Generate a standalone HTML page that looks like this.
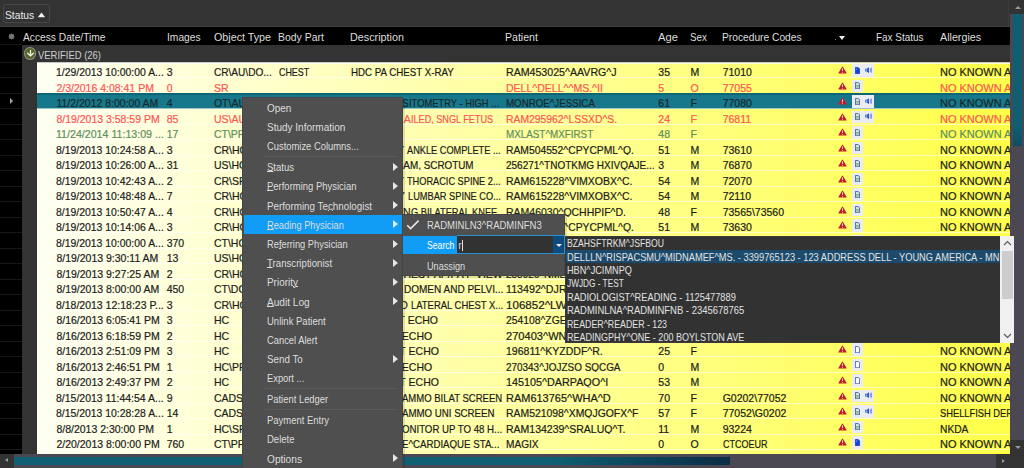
<!DOCTYPE html><html><head><meta charset="utf-8"><style>

*{margin:0;padding:0;box-sizing:border-box}
html,body{width:1024px;height:468px;overflow:hidden;background:#333333;font-family:"Liberation Sans",sans-serif}
.a{position:absolute}
.t{position:absolute;white-space:nowrap;font-size:10.5px;line-height:15.5px;-webkit-text-stroke:0.2px currentColor}
.hd{position:absolute;white-space:nowrap;font-size:10.6px;color:#dedede;top:28.7px;line-height:17.5px}

</style></head><body>
<div class="a" style="left:3px;top:4px;width:47px;height:19px;border:1px solid #474747;border-radius:2px"></div>
<div class="a" style="left:4.8px;top:7.2px;font-size:11.4px;line-height:17px;color:#eaeaea;transform:scaleX(0.904);transform-origin:0 0">Status</div>
<svg class="a" style="left:37px;top:12px" width="9" height="6" viewBox="0 0 9 6"><path d="M0.8 5.3H8.2L4.5 0.5Z" fill="#f2f2f2"/></svg>
<div class="a" style="left:0;top:26px;width:1010px;height:1px;background:#404040"></div>
<div class="a" style="left:0;top:27px;width:1010px;height:17.5px;background:#000"></div>
<div class="hd" style="left:22.799999999999997px;transform:scaleX(0.9642);transform-origin:0 0">Access Date/Time</div>
<div class="hd" style="left:166.8px;transform:scaleX(0.9669);transform-origin:0 0">Images</div>
<div class="hd" style="left:213.6px;transform:scaleX(1.0116);transform-origin:0 0">Object Type</div>
<div class="hd" style="left:278.0px;transform:scaleX(0.9864);transform-origin:0 0">Body Part</div>
<div class="hd" style="left:350.09999999999997px;transform:scaleX(1.0170);transform-origin:0 0">Description</div>
<div class="hd" style="left:505.4px;transform:scaleX(0.9974);transform-origin:0 0">Patient</div>
<div class="hd" style="left:657.6999999999999px;transform:scaleX(1.0552);transform-origin:0 0">Age</div>
<div class="hd" style="left:689.9px;transform:scaleX(0.9252);transform-origin:0 0">Sex</div>
<div class="hd" style="left:722.1px;transform:scaleX(0.9654);transform-origin:0 0">Procedure Codes</div>
<div class="hd" style="left:875.6px;transform:scaleX(0.9400);transform-origin:0 0">Fax Status</div>
<div class="hd" style="left:939.5px;transform:scaleX(1.0113);transform-origin:0 0">Allergies</div>
<div class="a" style="left:834.6px;top:38.5px;width:1.3px;height:1.3px;background:#4080d0"></div>
<div class="a" style="left:839.4px;top:35.5px;width:0;height:0;border-left:3.7px solid transparent;border-right:3.7px solid transparent;border-top:4.3px solid #f0f0f0"></div>
<svg class="a" style="left:7.5px;top:32.5px" width="7" height="7" viewBox="0 0 7 7"><path d="M3.5 0.3L4.3 1.2L5.9 1.1L5.8 2.7L6.7 3.5L5.8 4.3L5.9 5.9L4.3 5.8L3.5 6.7L2.7 5.8L1.1 5.9L1.2 4.3L0.3 3.5L1.2 2.7L1.1 1.1L2.7 1.2Z" fill="#757575"/></svg>
<div class="a" style="left:0;top:44.5px;width:22px;height:409.5px;background:#000"></div>
<div class="a" style="left:0;top:44.00px;width:22px;height:1px;background:#16161d"></div>
<div class="a" style="left:0;top:61.50px;width:22px;height:1px;background:#16161d"></div>
<div class="a" style="left:0;top:77.00px;width:22px;height:1px;background:#16161d"></div>
<div class="a" style="left:0;top:92.50px;width:22px;height:1px;background:#16161d"></div>
<div class="a" style="left:0;top:108.00px;width:22px;height:1px;background:#16161d"></div>
<div class="a" style="left:0;top:123.50px;width:22px;height:1px;background:#16161d"></div>
<div class="a" style="left:0;top:139.00px;width:22px;height:1px;background:#16161d"></div>
<div class="a" style="left:0;top:154.50px;width:22px;height:1px;background:#16161d"></div>
<div class="a" style="left:0;top:170.00px;width:22px;height:1px;background:#16161d"></div>
<div class="a" style="left:0;top:185.50px;width:22px;height:1px;background:#16161d"></div>
<div class="a" style="left:0;top:201.00px;width:22px;height:1px;background:#16161d"></div>
<div class="a" style="left:0;top:216.50px;width:22px;height:1px;background:#16161d"></div>
<div class="a" style="left:0;top:232.00px;width:22px;height:1px;background:#16161d"></div>
<div class="a" style="left:0;top:247.50px;width:22px;height:1px;background:#16161d"></div>
<div class="a" style="left:0;top:263.00px;width:22px;height:1px;background:#16161d"></div>
<div class="a" style="left:0;top:278.50px;width:22px;height:1px;background:#16161d"></div>
<div class="a" style="left:0;top:294.00px;width:22px;height:1px;background:#16161d"></div>
<div class="a" style="left:0;top:309.50px;width:22px;height:1px;background:#16161d"></div>
<div class="a" style="left:0;top:325.00px;width:22px;height:1px;background:#16161d"></div>
<div class="a" style="left:0;top:340.50px;width:22px;height:1px;background:#16161d"></div>
<div class="a" style="left:0;top:356.00px;width:22px;height:1px;background:#16161d"></div>
<div class="a" style="left:0;top:371.50px;width:22px;height:1px;background:#16161d"></div>
<div class="a" style="left:0;top:387.00px;width:22px;height:1px;background:#16161d"></div>
<div class="a" style="left:0;top:402.50px;width:22px;height:1px;background:#16161d"></div>
<div class="a" style="left:0;top:418.00px;width:22px;height:1px;background:#16161d"></div>
<div class="a" style="left:0;top:433.50px;width:22px;height:1px;background:#16161d"></div>
<div class="a" style="left:0;top:449.00px;width:22px;height:1px;background:#16161d"></div>
<div class="a" style="left:9.8px;top:98.3px;width:0;height:0;border-top:3.3px solid transparent;border-bottom:3.3px solid transparent;border-left:3.9px solid #a8a8a8"></div>
<div class="a" style="left:22px;top:44.5px;width:988px;height:17.5px;background:#333"></div>
<div class="a" style="left:24.6px;top:48.1px;width:10.6px;height:10.6px;border-radius:50%;background:#55652a;box-shadow:0 0 0 1px #8f8f86"></div>
<svg class="a" style="left:24.6px;top:48.1px" width="11" height="11" viewBox="0 0 11 11"><path d="M5.5 2.4V7.4M2.6 5.2L5.5 7.9L8.4 5.2" stroke="#eef0e4" stroke-width="1.3" fill="none" stroke-linecap="round"/></svg>
<div class="a" style="left:38.3px;top:47px;font-size:10.8px;line-height:17.5px;color:#cfcfcf;white-space:nowrap;transform:scaleX(0.875);transform-origin:0 0">VERIFIED (26)</div>
<div class="a" style="left:37px;top:62px;width:973px;height:392px;overflow:hidden">
<div class="a" style="left:0;top:0.00px;width:973px;height:15.5px;background:linear-gradient(90deg,#fffff2 0%,#ffff48 100%)"></div>
<div class="a" style="left:0;top:0;width:973px;height:1px;background:#c9c9c2"></div>
<div class="a" style="left:0;top:1px;width:973px;height:1.2px;background:rgba(255,255,255,0.75)"></div>
<div class="t" style="left:19.40px;top:3.40px;color:#1c1c1c;transform:scaleX(0.9925);transform-origin:0 0">1/29/2013 10:00:00 A...</div>
<div class="t" style="left:129.70px;top:3.40px;color:#1c1c1c">3</div>
<div class="t" style="left:176.90px;top:3.40px;color:#1c1c1c;transform:scaleX(0.9602);transform-origin:0 0">CR\AU\DO...</div>
<div class="t" style="left:241.60px;top:3.40px;color:#1c1c1c;transform:scaleX(0.8485);transform-origin:0 0">CHEST</div>
<div class="t" style="left:313.50px;top:3.40px;color:#1c1c1c;transform:scaleX(0.9273);transform-origin:0 0">HDC PA CHEST X-RAY</div>
<div class="t" style="left:469.40px;top:3.40px;color:#1c1c1c;transform:scaleX(1.0103);transform-origin:0 0">RAM453025^AAVRG^J</div>
<div class="t" style="left:621.30px;top:3.40px;color:#1c1c1c">35</div>
<div class="t" style="left:653.50px;top:3.40px;color:#1c1c1c">M</div>
<div class="t" style="left:685.70px;top:3.40px;color:#1c1c1c">71010</div>
<div class="t" style="left:903.10px;top:3.40px;color:#1c1c1c;transform:scaleX(1.0459);transform-origin:0 0">NO KNOWN A</div>
<svg class="a" style="left:801px;top:4.30px" width="9" height="8" viewBox="0 0 9 8"><path d="M4.5 0.5Q4.8 0.5 5 0.9L8.6 6.9Q8.8 7.4 8.2 7.4H0.8Q0.2 7.4 0.4 6.9L4 0.9Q4.2 0.5 4.5 0.5Z" fill="#c41a2c"/><path d="M4.5 2.3V5M4.5 5.8V6.7" stroke="#f6d0d6" stroke-width="1"/></svg>
<div class="a" style="left:815px;top:2.20px;width:22px;height:12.5px;background:#ebebf2"></div>
<svg class="a" style="left:817.6px;top:4.60px" width="5" height="7.2" viewBox="0 0 5 7.2"><path d="M0.4 0.4H3.1L4.6 1.9V6.8H0.4Z" fill="#1244e0" stroke="#0b2fa8" stroke-width="0.7"/><path d="M1.4 1.4V3" stroke="#4ab0ff" stroke-width="0.9"/></svg>
<svg class="a" style="left:827.9px;top:4.90px" width="7" height="6.4" viewBox="0 0 7 6.4"><path d="M0.3 1.8H1.8L4 0.2V6.2L1.8 4.6H0.3Z" fill="#2a5ad8"/><path d="M1 2.4H2.2V4H1Z" fill="#7ac0f0"/><path d="M5.2 1.3Q5.9 3.2 5.2 5.1M6.2 0.5Q7 3.2 6.2 5.9" stroke="#6a7ad0" stroke-width="0.8" fill="none"/></svg>
<div class="a" style="left:0;top:15.50px;width:973px;height:15.5px;background:linear-gradient(90deg,#fffff2 0%,#ffff48 100%)"></div>
<div class="a" style="left:0;top:15.20px;width:973px;height:1.2px;background:rgba(255,255,255,0.6)"></div>
<div class="t" style="left:19.40px;top:18.90px;color:#ff5555">2/3/2016 4:08:41 PM</div>
<div class="t" style="left:129.70px;top:18.90px;color:#ff5555">0</div>
<div class="t" style="left:176.90px;top:18.90px;color:#ff5555">SR</div>
<div class="t" style="left:469.40px;top:18.90px;color:#ff5555;transform:scaleX(1.0010);transform-origin:0 0">DELL^DELL^^MS.^II</div>
<div class="t" style="left:621.30px;top:18.90px;color:#ff5555">5</div>
<div class="t" style="left:653.50px;top:18.90px;color:#ff5555">O</div>
<div class="t" style="left:685.70px;top:18.90px;color:#ff5555">77055</div>
<div class="t" style="left:903.10px;top:18.90px;color:#ff5555;transform:scaleX(1.0459);transform-origin:0 0">NO KNOWN A</div>
<svg class="a" style="left:801px;top:19.80px" width="9" height="8" viewBox="0 0 9 8"><path d="M4.5 0.5Q4.8 0.5 5 0.9L8.6 6.9Q8.8 7.4 8.2 7.4H0.8Q0.2 7.4 0.4 6.9L4 0.9Q4.2 0.5 4.5 0.5Z" fill="#c41a2c"/><path d="M4.5 2.3V5M4.5 5.8V6.7" stroke="#f6d0d6" stroke-width="1"/></svg>
<div class="a" style="left:815px;top:17.70px;width:11px;height:12.5px;background:#ebebf2"></div>
<svg class="a" style="left:817.6px;top:20.10px" width="5" height="7.2" viewBox="0 0 5 7.2"><path d="M0.4 0.4H3.1L4.6 1.9V6.8H0.4Z" fill="#cfe8d0" stroke="#2a40b0" stroke-width="0.8"/><path d="M1.2 3.6H3.8M1.2 5H3.8" stroke="#5a9a5a" stroke-width="0.8"/></svg>
<div class="a" style="left:0;top:31.00px;width:973px;height:16px;background:#17788b;border-top:2px solid #0c6676;border-bottom:1.5px solid #0c6676"></div>
<div class="t" style="left:19.40px;top:34.40px;color:#17282c">11/2/2012 8:00:00 AM</div>
<div class="t" style="left:129.70px;top:34.40px;color:#17282c">4</div>
<div class="t" style="left:176.90px;top:34.40px;color:#17282c">OT\AU\DO...</div>
<div class="t" style="left:371.80px;top:34.40px;color:#17282c;transform:scaleX(0.8916);transform-origin:0 0">ITOMETRY - HIGH ...</div>
<div class="t" style="right:601.20px;top:34.40px;color:#17282c">S</div>
<div class="t" style="left:469.40px;top:34.40px;color:#17282c;transform:scaleX(0.9265);transform-origin:0 0">MONROE^JESSICA</div>
<div class="t" style="left:621.30px;top:34.40px;color:#17282c">61</div>
<div class="t" style="left:653.50px;top:34.40px;color:#17282c">F</div>
<div class="t" style="left:685.70px;top:34.40px;color:#17282c">77080</div>
<div class="t" style="left:903.10px;top:34.40px;color:#17282c;transform:scaleX(1.0459);transform-origin:0 0">NO KNOWN A</div>
<svg class="a" style="left:801px;top:35.30px" width="9" height="8" viewBox="0 0 9 8"><path d="M4.5 0.5Q4.8 0.5 5 0.9L8.6 6.9Q8.8 7.4 8.2 7.4H0.8Q0.2 7.4 0.4 6.9L4 0.9Q4.2 0.5 4.5 0.5Z" fill="#c41a2c"/><path d="M4.5 2.3V5M4.5 5.8V6.7" stroke="#f6d0d6" stroke-width="1"/></svg>
<div class="a" style="left:815px;top:33.20px;width:22px;height:12.5px;background:#ebebf2"></div>
<svg class="a" style="left:817.6px;top:35.60px" width="5" height="7.2" viewBox="0 0 5 7.2"><path d="M0.4 0.4H3.1L4.6 1.9V6.8H0.4Z" fill="#cfe8d0" stroke="#2a40b0" stroke-width="0.8"/><path d="M1.2 3.6H3.8M1.2 5H3.8" stroke="#5a9a5a" stroke-width="0.8"/></svg>
<svg class="a" style="left:827.9px;top:35.90px" width="7" height="6.4" viewBox="0 0 7 6.4"><path d="M0.3 1.8H1.8L4 0.2V6.2L1.8 4.6H0.3Z" fill="#2a5ad8"/><path d="M1 2.4H2.2V4H1Z" fill="#7ac0f0"/><path d="M5.2 1.3Q5.9 3.2 5.2 5.1M6.2 0.5Q7 3.2 6.2 5.9" stroke="#6a7ad0" stroke-width="0.8" fill="none"/></svg>
<div class="a" style="left:0;top:46.50px;width:973px;height:15.5px;background:linear-gradient(90deg,#fffff2 0%,#ffff48 100%)"></div>
<div class="a" style="left:0;top:46.20px;width:973px;height:1.2px;background:rgba(255,255,255,0.6)"></div>
<div class="t" style="left:19.40px;top:49.90px;color:#ff5555">8/19/2013 3:58:59 PM</div>
<div class="t" style="left:129.70px;top:49.90px;color:#ff5555">85</div>
<div class="t" style="left:176.90px;top:49.90px;color:#ff5555">US\AU\DO...</div>
<div class="t" style="left:373.80px;top:49.90px;color:#ff5555;transform:scaleX(0.8668);transform-origin:0 0">ILED, SNGL FETUS</div>
<div class="t" style="right:599.20px;top:49.90px;color:#ff5555">A</div>
<div class="t" style="left:469.40px;top:49.90px;color:#ff5555;transform:scaleX(0.9869);transform-origin:0 0">RAM295962^LSSXD^S.</div>
<div class="t" style="left:621.30px;top:49.90px;color:#ff5555">24</div>
<div class="t" style="left:653.50px;top:49.90px;color:#ff5555">F</div>
<div class="t" style="left:685.70px;top:49.90px;color:#ff5555">76811</div>
<div class="t" style="left:903.10px;top:49.90px;color:#ff5555;transform:scaleX(1.0459);transform-origin:0 0">NO KNOWN A</div>
<svg class="a" style="left:801px;top:50.80px" width="9" height="8" viewBox="0 0 9 8"><path d="M4.5 0.5Q4.8 0.5 5 0.9L8.6 6.9Q8.8 7.4 8.2 7.4H0.8Q0.2 7.4 0.4 6.9L4 0.9Q4.2 0.5 4.5 0.5Z" fill="#c41a2c"/><path d="M4.5 2.3V5M4.5 5.8V6.7" stroke="#f6d0d6" stroke-width="1"/></svg>
<div class="a" style="left:815px;top:48.70px;width:22px;height:12.5px;background:#ebebf2"></div>
<svg class="a" style="left:817.6px;top:51.10px" width="5" height="7.2" viewBox="0 0 5 7.2"><path d="M0.4 0.4H3.1L4.6 1.9V6.8H0.4Z" fill="#cfe8d0" stroke="#2a40b0" stroke-width="0.8"/><path d="M1.2 3.6H3.8M1.2 5H3.8" stroke="#5a9a5a" stroke-width="0.8"/></svg>
<svg class="a" style="left:827.9px;top:51.40px" width="7" height="6.4" viewBox="0 0 7 6.4"><path d="M0.3 1.8H1.8L4 0.2V6.2L1.8 4.6H0.3Z" fill="#2a5ad8"/><path d="M1 2.4H2.2V4H1Z" fill="#7ac0f0"/><path d="M5.2 1.3Q5.9 3.2 5.2 5.1M6.2 0.5Q7 3.2 6.2 5.9" stroke="#6a7ad0" stroke-width="0.8" fill="none"/></svg>
<div class="a" style="left:0;top:62.00px;width:973px;height:15.5px;background:linear-gradient(90deg,#fffff2 0%,#ffff48 100%)"></div>
<div class="a" style="left:0;top:61.70px;width:973px;height:1.2px;background:rgba(255,255,255,0.6)"></div>
<div class="t" style="left:19.40px;top:65.40px;color:#5e8e5e;transform:scaleX(1.0127);transform-origin:0 0">11/24/2014 11:13:09 ...</div>
<div class="t" style="left:129.70px;top:65.40px;color:#5e8e5e">17</div>
<div class="t" style="left:176.90px;top:65.40px;color:#5e8e5e">CT\PR\DO...</div>
<div class="t" style="left:469.40px;top:65.40px;color:#5e8e5e;transform:scaleX(0.9373);transform-origin:0 0">MXLAST^MXFIRST</div>
<div class="t" style="left:621.30px;top:65.40px;color:#5e8e5e">48</div>
<div class="t" style="left:653.50px;top:65.40px;color:#5e8e5e">F</div>
<div class="t" style="left:685.70px;top:65.40px;color:#5e8e5e"></div>
<div class="t" style="left:903.10px;top:65.40px;color:#5e8e5e;transform:scaleX(1.0459);transform-origin:0 0">NO KNOWN A</div>
<svg class="a" style="left:801px;top:66.30px" width="9" height="8" viewBox="0 0 9 8"><path d="M4.5 0.5Q4.8 0.5 5 0.9L8.6 6.9Q8.8 7.4 8.2 7.4H0.8Q0.2 7.4 0.4 6.9L4 0.9Q4.2 0.5 4.5 0.5Z" fill="#c41a2c"/><path d="M4.5 2.3V5M4.5 5.8V6.7" stroke="#f6d0d6" stroke-width="1"/></svg>
<div class="a" style="left:815px;top:64.20px;width:11px;height:12.5px;background:#ebebf2"></div>
<svg class="a" style="left:817.6px;top:66.60px" width="5" height="7.2" viewBox="0 0 5 7.2"><path d="M0.4 0.4H3.1L4.6 1.9V6.8H0.4Z" fill="#cfe8d0" stroke="#2a40b0" stroke-width="0.8"/><path d="M1.2 3.6H3.8M1.2 5H3.8" stroke="#5a9a5a" stroke-width="0.8"/></svg>
<div class="a" style="left:0;top:77.50px;width:973px;height:15.5px;background:linear-gradient(90deg,#fffff2 0%,#ffff48 100%)"></div>
<div class="a" style="left:0;top:77.20px;width:973px;height:1.2px;background:rgba(255,255,255,0.6)"></div>
<div class="t" style="left:19.40px;top:80.90px;color:#1c1c1c;transform:scaleX(0.9925);transform-origin:0 0">8/19/2013 10:24:58 A...</div>
<div class="t" style="left:129.70px;top:80.90px;color:#1c1c1c">3</div>
<div class="t" style="left:176.90px;top:80.90px;color:#1c1c1c">CR\HO\DO...</div>
<div class="t" style="left:370.00px;top:80.90px;color:#1c1c1c;transform:scaleX(0.8766);transform-origin:0 0">ANKLE COMPLETE ...</div>
<div class="t" style="right:603.00px;top:80.90px;color:#1c1c1c">Y&nbsp;</div>
<div class="t" style="left:469.40px;top:80.90px;color:#1c1c1c;transform:scaleX(0.9825);transform-origin:0 0">RAM504552^CPYCPML^Q.</div>
<div class="t" style="left:621.30px;top:80.90px;color:#1c1c1c">51</div>
<div class="t" style="left:653.50px;top:80.90px;color:#1c1c1c">M</div>
<div class="t" style="left:685.70px;top:80.90px;color:#1c1c1c">73610</div>
<div class="t" style="left:903.10px;top:80.90px;color:#1c1c1c;transform:scaleX(1.0459);transform-origin:0 0">NO KNOWN A</div>
<svg class="a" style="left:801px;top:81.80px" width="9" height="8" viewBox="0 0 9 8"><path d="M4.5 0.5Q4.8 0.5 5 0.9L8.6 6.9Q8.8 7.4 8.2 7.4H0.8Q0.2 7.4 0.4 6.9L4 0.9Q4.2 0.5 4.5 0.5Z" fill="#c41a2c"/><path d="M4.5 2.3V5M4.5 5.8V6.7" stroke="#f6d0d6" stroke-width="1"/></svg>
<div class="a" style="left:815px;top:79.70px;width:11px;height:12.5px;background:#ebebf2"></div>
<svg class="a" style="left:817.6px;top:82.10px" width="5" height="7.2" viewBox="0 0 5 7.2"><path d="M0.4 0.4H3.1L4.6 1.9V6.8H0.4Z" fill="#cfe8d0" stroke="#2a40b0" stroke-width="0.8"/><path d="M1.2 3.6H3.8M1.2 5H3.8" stroke="#5a9a5a" stroke-width="0.8"/></svg>
<div class="a" style="left:0;top:93.00px;width:973px;height:15.5px;background:linear-gradient(90deg,#fffff2 0%,#ffff48 100%)"></div>
<div class="a" style="left:0;top:92.70px;width:973px;height:1.2px;background:rgba(255,255,255,0.6)"></div>
<div class="t" style="left:19.40px;top:96.40px;color:#1c1c1c;transform:scaleX(0.9925);transform-origin:0 0">8/19/2013 10:26:00 A...</div>
<div class="t" style="left:129.70px;top:96.40px;color:#1c1c1c">31</div>
<div class="t" style="left:176.90px;top:96.40px;color:#1c1c1c">US\HO\DO...</div>
<div class="t" style="left:373.00px;top:96.40px;color:#1c1c1c;transform:scaleX(0.9398);transform-origin:0 0">M, SCROTUM</div>
<div class="t" style="right:600.00px;top:96.40px;color:#1c1c1c">A</div>
<div class="t" style="left:469.40px;top:96.40px;color:#1c1c1c;transform:scaleX(0.9522);transform-origin:0 0">256271^TNOTKMG HXIVQAJE...</div>
<div class="t" style="left:621.30px;top:96.40px;color:#1c1c1c">3</div>
<div class="t" style="left:653.50px;top:96.40px;color:#1c1c1c">M</div>
<div class="t" style="left:685.70px;top:96.40px;color:#1c1c1c">76870</div>
<div class="t" style="left:903.10px;top:96.40px;color:#1c1c1c;transform:scaleX(1.0459);transform-origin:0 0">NO KNOWN A</div>
<svg class="a" style="left:801px;top:97.30px" width="9" height="8" viewBox="0 0 9 8"><path d="M4.5 0.5Q4.8 0.5 5 0.9L8.6 6.9Q8.8 7.4 8.2 7.4H0.8Q0.2 7.4 0.4 6.9L4 0.9Q4.2 0.5 4.5 0.5Z" fill="#c41a2c"/><path d="M4.5 2.3V5M4.5 5.8V6.7" stroke="#f6d0d6" stroke-width="1"/></svg>
<div class="a" style="left:815px;top:95.20px;width:11px;height:12.5px;background:#ebebf2"></div>
<svg class="a" style="left:817.6px;top:97.60px" width="5" height="7.2" viewBox="0 0 5 7.2"><path d="M0.4 0.4H3.1L4.6 1.9V6.8H0.4Z" fill="#cfe8d0" stroke="#2a40b0" stroke-width="0.8"/><path d="M1.2 3.6H3.8M1.2 5H3.8" stroke="#5a9a5a" stroke-width="0.8"/></svg>
<div class="a" style="left:0;top:108.50px;width:973px;height:15.5px;background:linear-gradient(90deg,#fffff2 0%,#ffff48 100%)"></div>
<div class="a" style="left:0;top:108.20px;width:973px;height:1.2px;background:rgba(255,255,255,0.6)"></div>
<div class="t" style="left:19.40px;top:111.90px;color:#1c1c1c;transform:scaleX(0.9925);transform-origin:0 0">8/19/2013 10:42:43 A...</div>
<div class="t" style="left:129.70px;top:111.90px;color:#1c1c1c">2</div>
<div class="t" style="left:176.90px;top:111.90px;color:#1c1c1c">CR\SR\DO...</div>
<div class="t" style="left:370.00px;top:111.90px;color:#1c1c1c;transform:scaleX(0.8766);transform-origin:0 0">THORACIC SPINE 2...</div>
<div class="t" style="right:603.00px;top:111.90px;color:#1c1c1c">Y&nbsp;</div>
<div class="t" style="left:469.40px;top:111.90px;color:#1c1c1c;transform:scaleX(0.9986);transform-origin:0 0">RAM615228^VIMXOBX^C.</div>
<div class="t" style="left:621.30px;top:111.90px;color:#1c1c1c">54</div>
<div class="t" style="left:653.50px;top:111.90px;color:#1c1c1c">M</div>
<div class="t" style="left:685.70px;top:111.90px;color:#1c1c1c">72070</div>
<div class="t" style="left:903.10px;top:111.90px;color:#1c1c1c;transform:scaleX(1.0459);transform-origin:0 0">NO KNOWN A</div>
<svg class="a" style="left:801px;top:112.80px" width="9" height="8" viewBox="0 0 9 8"><path d="M4.5 0.5Q4.8 0.5 5 0.9L8.6 6.9Q8.8 7.4 8.2 7.4H0.8Q0.2 7.4 0.4 6.9L4 0.9Q4.2 0.5 4.5 0.5Z" fill="#c41a2c"/><path d="M4.5 2.3V5M4.5 5.8V6.7" stroke="#f6d0d6" stroke-width="1"/></svg>
<div class="a" style="left:815px;top:110.70px;width:11px;height:12.5px;background:#ebebf2"></div>
<svg class="a" style="left:817.6px;top:113.10px" width="5" height="7.2" viewBox="0 0 5 7.2"><path d="M0.4 0.4H3.1L4.6 1.9V6.8H0.4Z" fill="#cfe8d0" stroke="#2a40b0" stroke-width="0.8"/><path d="M1.2 3.6H3.8M1.2 5H3.8" stroke="#5a9a5a" stroke-width="0.8"/></svg>
<div class="a" style="left:0;top:124.00px;width:973px;height:15.5px;background:linear-gradient(90deg,#fffff2 0%,#ffff48 100%)"></div>
<div class="a" style="left:0;top:123.70px;width:973px;height:1.2px;background:rgba(255,255,255,0.6)"></div>
<div class="t" style="left:19.40px;top:127.40px;color:#1c1c1c;transform:scaleX(0.9925);transform-origin:0 0">8/19/2013 10:48:48 A...</div>
<div class="t" style="left:129.70px;top:127.40px;color:#1c1c1c">7</div>
<div class="t" style="left:176.90px;top:127.40px;color:#1c1c1c">CR\HO\DO...</div>
<div class="t" style="left:370.70px;top:127.40px;color:#1c1c1c;transform:scaleX(0.8797);transform-origin:0 0">LUMBAR SPINE CO...</div>
<div class="t" style="right:602.30px;top:127.40px;color:#1c1c1c">Y&nbsp;</div>
<div class="t" style="left:469.40px;top:127.40px;color:#1c1c1c;transform:scaleX(0.9986);transform-origin:0 0">RAM615228^VIMXOBX^C.</div>
<div class="t" style="left:621.30px;top:127.40px;color:#1c1c1c">54</div>
<div class="t" style="left:653.50px;top:127.40px;color:#1c1c1c">M</div>
<div class="t" style="left:685.70px;top:127.40px;color:#1c1c1c">72110</div>
<div class="t" style="left:903.10px;top:127.40px;color:#1c1c1c;transform:scaleX(1.0459);transform-origin:0 0">NO KNOWN A</div>
<svg class="a" style="left:801px;top:128.30px" width="9" height="8" viewBox="0 0 9 8"><path d="M4.5 0.5Q4.8 0.5 5 0.9L8.6 6.9Q8.8 7.4 8.2 7.4H0.8Q0.2 7.4 0.4 6.9L4 0.9Q4.2 0.5 4.5 0.5Z" fill="#c41a2c"/><path d="M4.5 2.3V5M4.5 5.8V6.7" stroke="#f6d0d6" stroke-width="1"/></svg>
<div class="a" style="left:815px;top:126.20px;width:11px;height:12.5px;background:#ebebf2"></div>
<svg class="a" style="left:817.6px;top:128.60px" width="5" height="7.2" viewBox="0 0 5 7.2"><path d="M0.4 0.4H3.1L4.6 1.9V6.8H0.4Z" fill="#cfe8d0" stroke="#2a40b0" stroke-width="0.8"/><path d="M1.2 3.6H3.8M1.2 5H3.8" stroke="#5a9a5a" stroke-width="0.8"/></svg>
<div class="a" style="left:0;top:139.50px;width:973px;height:15.5px;background:linear-gradient(90deg,#fffff2 0%,#ffff48 100%)"></div>
<div class="a" style="left:0;top:139.20px;width:973px;height:1.2px;background:rgba(255,255,255,0.6)"></div>
<div class="t" style="left:19.40px;top:142.90px;color:#1c1c1c;transform:scaleX(0.9925);transform-origin:0 0">8/19/2013 10:50:47 A...</div>
<div class="t" style="left:129.70px;top:142.90px;color:#1c1c1c">4</div>
<div class="t" style="left:176.90px;top:142.90px;color:#1c1c1c">CR\HO\DO...</div>
<div class="t" style="left:373.50px;top:142.90px;color:#1c1c1c;transform:scaleX(0.8792);transform-origin:0 0">G BILATERAL KNEE</div>
<div class="t" style="right:599.50px;top:142.90px;color:#1c1c1c">N</div>
<div class="t" style="left:469.40px;top:142.90px;color:#1c1c1c;transform:scaleX(0.9988);transform-origin:0 0">RAM46030^QCHHPIF^D.</div>
<div class="t" style="left:621.30px;top:142.90px;color:#1c1c1c">48</div>
<div class="t" style="left:653.50px;top:142.90px;color:#1c1c1c">F</div>
<div class="t" style="left:685.70px;top:142.90px;color:#1c1c1c">73565\73560</div>
<div class="t" style="left:903.10px;top:142.90px;color:#1c1c1c;transform:scaleX(1.0459);transform-origin:0 0">NO KNOWN A</div>
<svg class="a" style="left:801px;top:143.80px" width="9" height="8" viewBox="0 0 9 8"><path d="M4.5 0.5Q4.8 0.5 5 0.9L8.6 6.9Q8.8 7.4 8.2 7.4H0.8Q0.2 7.4 0.4 6.9L4 0.9Q4.2 0.5 4.5 0.5Z" fill="#c41a2c"/><path d="M4.5 2.3V5M4.5 5.8V6.7" stroke="#f6d0d6" stroke-width="1"/></svg>
<div class="a" style="left:815px;top:141.70px;width:11px;height:12.5px;background:#ebebf2"></div>
<svg class="a" style="left:817.6px;top:144.10px" width="5" height="7.2" viewBox="0 0 5 7.2"><path d="M0.4 0.4H3.1L4.6 1.9V6.8H0.4Z" fill="#cfe8d0" stroke="#2a40b0" stroke-width="0.8"/><path d="M1.2 3.6H3.8M1.2 5H3.8" stroke="#5a9a5a" stroke-width="0.8"/></svg>
<div class="a" style="left:0;top:155.00px;width:973px;height:15.5px;background:linear-gradient(90deg,#fffff2 0%,#ffff48 100%)"></div>
<div class="a" style="left:0;top:154.70px;width:973px;height:1.2px;background:rgba(255,255,255,0.6)"></div>
<div class="t" style="left:19.40px;top:158.40px;color:#1c1c1c;transform:scaleX(0.9925);transform-origin:0 0">8/19/2013 10:14:06 A...</div>
<div class="t" style="left:129.70px;top:158.40px;color:#1c1c1c">3</div>
<div class="t" style="left:176.90px;top:158.40px;color:#1c1c1c">CR\HO\DO...</div>
<div class="t" style="left:469.40px;top:158.40px;color:#1c1c1c;transform:scaleX(0.9825);transform-origin:0 0">RAM504552^CPYCPML^Q.</div>
<div class="t" style="left:621.30px;top:158.40px;color:#1c1c1c">51</div>
<div class="t" style="left:653.50px;top:158.40px;color:#1c1c1c">M</div>
<div class="t" style="left:685.70px;top:158.40px;color:#1c1c1c">73630</div>
<div class="t" style="left:903.10px;top:158.40px;color:#1c1c1c;transform:scaleX(1.0459);transform-origin:0 0">NO KNOWN A</div>
<svg class="a" style="left:801px;top:159.30px" width="9" height="8" viewBox="0 0 9 8"><path d="M4.5 0.5Q4.8 0.5 5 0.9L8.6 6.9Q8.8 7.4 8.2 7.4H0.8Q0.2 7.4 0.4 6.9L4 0.9Q4.2 0.5 4.5 0.5Z" fill="#c41a2c"/><path d="M4.5 2.3V5M4.5 5.8V6.7" stroke="#f6d0d6" stroke-width="1"/></svg>
<div class="a" style="left:815px;top:157.20px;width:11px;height:12.5px;background:#ebebf2"></div>
<svg class="a" style="left:817.6px;top:159.60px" width="5" height="7.2" viewBox="0 0 5 7.2"><path d="M0.4 0.4H3.1L4.6 1.9V6.8H0.4Z" fill="#cfe8d0" stroke="#2a40b0" stroke-width="0.8"/><path d="M1.2 3.6H3.8M1.2 5H3.8" stroke="#5a9a5a" stroke-width="0.8"/></svg>
<div class="a" style="left:0;top:170.50px;width:973px;height:15.5px;background:linear-gradient(90deg,#fffff2 0%,#ffff48 100%)"></div>
<div class="a" style="left:0;top:170.20px;width:973px;height:1.2px;background:rgba(255,255,255,0.6)"></div>
<div class="t" style="left:19.40px;top:173.90px;color:#1c1c1c;transform:scaleX(0.9925);transform-origin:0 0">8/19/2013 10:00:00 A...</div>
<div class="t" style="left:129.70px;top:173.90px;color:#1c1c1c">370</div>
<div class="t" style="left:176.90px;top:173.90px;color:#1c1c1c">CT\HO\DO...</div>
<div class="t" style="left:469.40px;top:173.90px;color:#1c1c1c;transform:scaleX(0.95);transform-origin:0 0">RAM46030^QCHHPIF^D.</div>
<div class="t" style="left:621.30px;top:173.90px;color:#1c1c1c">48</div>
<div class="t" style="left:653.50px;top:173.90px;color:#1c1c1c">F</div>
<div class="t" style="left:685.70px;top:173.90px;color:#1c1c1c"></div>
<div class="t" style="left:903.10px;top:173.90px;color:#1c1c1c;transform:scaleX(1.0459);transform-origin:0 0">NO KNOWN A</div>
<svg class="a" style="left:801px;top:174.80px" width="9" height="8" viewBox="0 0 9 8"><path d="M4.5 0.5Q4.8 0.5 5 0.9L8.6 6.9Q8.8 7.4 8.2 7.4H0.8Q0.2 7.4 0.4 6.9L4 0.9Q4.2 0.5 4.5 0.5Z" fill="#c41a2c"/><path d="M4.5 2.3V5M4.5 5.8V6.7" stroke="#f6d0d6" stroke-width="1"/></svg>
<div class="a" style="left:815px;top:172.70px;width:11px;height:12.5px;background:#ebebf2"></div>
<svg class="a" style="left:817.6px;top:175.10px" width="5" height="7.2" viewBox="0 0 5 7.2"><path d="M0.4 0.4H3.1L4.6 1.9V6.8H0.4Z" fill="#cfe8d0" stroke="#2a40b0" stroke-width="0.8"/><path d="M1.2 3.6H3.8M1.2 5H3.8" stroke="#5a9a5a" stroke-width="0.8"/></svg>
<div class="a" style="left:0;top:186.00px;width:973px;height:15.5px;background:linear-gradient(90deg,#fffff2 0%,#ffff48 100%)"></div>
<div class="a" style="left:0;top:185.70px;width:973px;height:1.2px;background:rgba(255,255,255,0.6)"></div>
<div class="t" style="left:19.40px;top:189.40px;color:#1c1c1c">8/19/2013 9:30:11 AM</div>
<div class="t" style="left:129.70px;top:189.40px;color:#1c1c1c">13</div>
<div class="t" style="left:176.90px;top:189.40px;color:#1c1c1c">US\HO\DO...</div>
<div class="t" style="left:469.40px;top:189.40px;color:#1c1c1c;transform:scaleX(0.95);transform-origin:0 0">RAM46030^QCHHPIF^D.</div>
<div class="t" style="left:621.30px;top:189.40px;color:#1c1c1c">48</div>
<div class="t" style="left:653.50px;top:189.40px;color:#1c1c1c">F</div>
<div class="t" style="left:685.70px;top:189.40px;color:#1c1c1c"></div>
<div class="t" style="left:903.10px;top:189.40px;color:#1c1c1c;transform:scaleX(1.0459);transform-origin:0 0">NO KNOWN A</div>
<svg class="a" style="left:801px;top:190.30px" width="9" height="8" viewBox="0 0 9 8"><path d="M4.5 0.5Q4.8 0.5 5 0.9L8.6 6.9Q8.8 7.4 8.2 7.4H0.8Q0.2 7.4 0.4 6.9L4 0.9Q4.2 0.5 4.5 0.5Z" fill="#c41a2c"/><path d="M4.5 2.3V5M4.5 5.8V6.7" stroke="#f6d0d6" stroke-width="1"/></svg>
<div class="a" style="left:815px;top:188.20px;width:11px;height:12.5px;background:#ebebf2"></div>
<svg class="a" style="left:817.6px;top:190.60px" width="5" height="7.2" viewBox="0 0 5 7.2"><path d="M0.4 0.4H3.1L4.6 1.9V6.8H0.4Z" fill="#cfe8d0" stroke="#2a40b0" stroke-width="0.8"/><path d="M1.2 3.6H3.8M1.2 5H3.8" stroke="#5a9a5a" stroke-width="0.8"/></svg>
<div class="a" style="left:0;top:201.50px;width:973px;height:15.5px;background:linear-gradient(90deg,#fffff2 0%,#ffff48 100%)"></div>
<div class="a" style="left:0;top:201.20px;width:973px;height:1.2px;background:rgba(255,255,255,0.6)"></div>
<div class="t" style="left:19.40px;top:204.90px;color:#1c1c1c">8/19/2013 9:27:25 AM</div>
<div class="t" style="left:129.70px;top:204.90px;color:#1c1c1c">2</div>
<div class="t" style="left:176.90px;top:204.90px;color:#1c1c1c">CR\HO\DO...</div>
<div class="t" style="left:366.50px;top:204.90px;color:#1c1c1c;width:99.5px;overflow:hidden">HEST AP/PA  P VIEW...</div>
<div class="t" style="right:606.50px;top:204.90px;color:#1c1c1c">C</div>
<div class="t" style="left:469.40px;top:204.90px;color:#1c1c1c;transform:scaleX(0.95);transform-origin:0 0">253926^NMLKJ^A</div>
<div class="t" style="left:621.30px;top:204.90px;color:#1c1c1c">40</div>
<div class="t" style="left:653.50px;top:204.90px;color:#1c1c1c">F</div>
<div class="t" style="left:685.70px;top:204.90px;color:#1c1c1c"></div>
<div class="t" style="left:903.10px;top:204.90px;color:#1c1c1c;transform:scaleX(1.0459);transform-origin:0 0">NO KNOWN A</div>
<svg class="a" style="left:801px;top:205.80px" width="9" height="8" viewBox="0 0 9 8"><path d="M4.5 0.5Q4.8 0.5 5 0.9L8.6 6.9Q8.8 7.4 8.2 7.4H0.8Q0.2 7.4 0.4 6.9L4 0.9Q4.2 0.5 4.5 0.5Z" fill="#c41a2c"/><path d="M4.5 2.3V5M4.5 5.8V6.7" stroke="#f6d0d6" stroke-width="1"/></svg>
<div class="a" style="left:815px;top:203.70px;width:11px;height:12.5px;background:#ebebf2"></div>
<svg class="a" style="left:817.6px;top:206.10px" width="5" height="7.2" viewBox="0 0 5 7.2"><path d="M0.4 0.4H3.1L4.6 1.9V6.8H0.4Z" fill="#cfe8d0" stroke="#2a40b0" stroke-width="0.8"/><path d="M1.2 3.6H3.8M1.2 5H3.8" stroke="#5a9a5a" stroke-width="0.8"/></svg>
<div class="a" style="left:0;top:217.00px;width:973px;height:15.5px;background:linear-gradient(90deg,#fffff2 0%,#ffff48 100%)"></div>
<div class="a" style="left:0;top:216.70px;width:973px;height:1.2px;background:rgba(255,255,255,0.6)"></div>
<div class="t" style="left:19.40px;top:220.40px;color:#1c1c1c">8/19/2013 8:00:00 AM</div>
<div class="t" style="left:129.70px;top:220.40px;color:#1c1c1c">450</div>
<div class="t" style="left:176.90px;top:220.40px;color:#1c1c1c">CT\DO\DO...</div>
<div class="t" style="left:366.60px;top:220.40px;color:#1c1c1c;transform:scaleX(0.9535);transform-origin:0 0">DOMEN AND PELVI...</div>
<div class="t" style="left:469.40px;top:220.40px;color:#1c1c1c;transform:scaleX(1.0166);transform-origin:0 0">113492^DJR</div>
<div class="t" style="left:621.30px;top:220.40px;color:#1c1c1c">40</div>
<div class="t" style="left:653.50px;top:220.40px;color:#1c1c1c">F</div>
<div class="t" style="left:685.70px;top:220.40px;color:#1c1c1c"></div>
<div class="t" style="left:903.10px;top:220.40px;color:#1c1c1c;transform:scaleX(1.0459);transform-origin:0 0">NO KNOWN A</div>
<svg class="a" style="left:801px;top:221.30px" width="9" height="8" viewBox="0 0 9 8"><path d="M4.5 0.5Q4.8 0.5 5 0.9L8.6 6.9Q8.8 7.4 8.2 7.4H0.8Q0.2 7.4 0.4 6.9L4 0.9Q4.2 0.5 4.5 0.5Z" fill="#c41a2c"/><path d="M4.5 2.3V5M4.5 5.8V6.7" stroke="#f6d0d6" stroke-width="1"/></svg>
<div class="a" style="left:815px;top:219.20px;width:11px;height:12.5px;background:#ebebf2"></div>
<svg class="a" style="left:817.6px;top:221.60px" width="5" height="7.2" viewBox="0 0 5 7.2"><path d="M0.4 0.4H3.1L4.6 1.9V6.8H0.4Z" fill="#cfe8d0" stroke="#2a40b0" stroke-width="0.8"/><path d="M1.2 3.6H3.8M1.2 5H3.8" stroke="#5a9a5a" stroke-width="0.8"/></svg>
<div class="a" style="left:0;top:232.50px;width:973px;height:15.5px;background:linear-gradient(90deg,#fffff2 0%,#ffff48 100%)"></div>
<div class="a" style="left:0;top:232.20px;width:973px;height:1.2px;background:rgba(255,255,255,0.6)"></div>
<div class="t" style="left:19.40px;top:235.90px;color:#1c1c1c;transform:scaleX(0.9997);transform-origin:0 0">8/18/2013 12:18:23 P...</div>
<div class="t" style="left:129.70px;top:235.90px;color:#1c1c1c">3</div>
<div class="t" style="left:176.90px;top:235.90px;color:#1c1c1c">CR\HO\DO...</div>
<div class="t" style="left:373.80px;top:235.90px;color:#1c1c1c;transform:scaleX(0.8994);transform-origin:0 0">LATERAL CHEST X...</div>
<div class="t" style="right:599.20px;top:235.90px;color:#1c1c1c">D&nbsp;</div>
<div class="t" style="left:469.40px;top:235.90px;color:#1c1c1c;transform:scaleX(1.1031);transform-origin:0 0">106852^LW</div>
<div class="t" style="left:621.30px;top:235.90px;color:#1c1c1c">40</div>
<div class="t" style="left:653.50px;top:235.90px;color:#1c1c1c">F</div>
<div class="t" style="left:685.70px;top:235.90px;color:#1c1c1c"></div>
<div class="t" style="left:903.10px;top:235.90px;color:#1c1c1c;transform:scaleX(1.0459);transform-origin:0 0">NO KNOWN A</div>
<svg class="a" style="left:801px;top:236.80px" width="9" height="8" viewBox="0 0 9 8"><path d="M4.5 0.5Q4.8 0.5 5 0.9L8.6 6.9Q8.8 7.4 8.2 7.4H0.8Q0.2 7.4 0.4 6.9L4 0.9Q4.2 0.5 4.5 0.5Z" fill="#c41a2c"/><path d="M4.5 2.3V5M4.5 5.8V6.7" stroke="#f6d0d6" stroke-width="1"/></svg>
<div class="a" style="left:815px;top:234.70px;width:11px;height:12.5px;background:#ebebf2"></div>
<svg class="a" style="left:817.6px;top:237.10px" width="5" height="7.2" viewBox="0 0 5 7.2"><path d="M0.4 0.4H3.1L4.6 1.9V6.8H0.4Z" fill="#cfe8d0" stroke="#2a40b0" stroke-width="0.8"/><path d="M1.2 3.6H3.8M1.2 5H3.8" stroke="#5a9a5a" stroke-width="0.8"/></svg>
<div class="a" style="left:0;top:248.00px;width:973px;height:15.5px;background:linear-gradient(90deg,#fffff2 0%,#ffff48 100%)"></div>
<div class="a" style="left:0;top:247.70px;width:973px;height:1.2px;background:rgba(255,255,255,0.6)"></div>
<div class="t" style="left:19.40px;top:251.40px;color:#1c1c1c">8/16/2013 6:05:41 PM</div>
<div class="t" style="left:129.70px;top:251.40px;color:#1c1c1c">3</div>
<div class="t" style="left:176.90px;top:251.40px;color:#1c1c1c">HC</div>
<div class="t" style="left:370.70px;top:251.40px;color:#1c1c1c;width:95.3px;overflow:hidden">ECHO</div>
<div class="t" style="right:602.30px;top:251.40px;color:#1c1c1c">T&nbsp;</div>
<div class="t" style="left:469.40px;top:251.40px;color:#1c1c1c;transform:scaleX(0.9844);transform-origin:0 0">254108^ZGE</div>
<div class="t" style="left:621.30px;top:251.40px;color:#1c1c1c">40</div>
<div class="t" style="left:653.50px;top:251.40px;color:#1c1c1c">F</div>
<div class="t" style="left:685.70px;top:251.40px;color:#1c1c1c"></div>
<div class="t" style="left:903.10px;top:251.40px;color:#1c1c1c;transform:scaleX(1.0459);transform-origin:0 0">NO KNOWN A</div>
<svg class="a" style="left:801px;top:252.30px" width="9" height="8" viewBox="0 0 9 8"><path d="M4.5 0.5Q4.8 0.5 5 0.9L8.6 6.9Q8.8 7.4 8.2 7.4H0.8Q0.2 7.4 0.4 6.9L4 0.9Q4.2 0.5 4.5 0.5Z" fill="#c41a2c"/><path d="M4.5 2.3V5M4.5 5.8V6.7" stroke="#f6d0d6" stroke-width="1"/></svg>
<div class="a" style="left:815px;top:250.20px;width:11px;height:12.5px;background:#ebebf2"></div>
<svg class="a" style="left:817.6px;top:252.60px" width="5" height="7.2" viewBox="0 0 5 7.2"><path d="M0.4 0.4H3.1L4.6 1.9V6.8H0.4Z" fill="#cfe8d0" stroke="#2a40b0" stroke-width="0.8"/><path d="M1.2 3.6H3.8M1.2 5H3.8" stroke="#5a9a5a" stroke-width="0.8"/></svg>
<div class="a" style="left:0;top:263.50px;width:973px;height:15.5px;background:linear-gradient(90deg,#fffff2 0%,#ffff48 100%)"></div>
<div class="a" style="left:0;top:263.20px;width:973px;height:1.2px;background:rgba(255,255,255,0.6)"></div>
<div class="t" style="left:19.40px;top:266.90px;color:#1c1c1c">8/16/2013 6:18:59 PM</div>
<div class="t" style="left:129.70px;top:266.90px;color:#1c1c1c">2</div>
<div class="t" style="left:176.90px;top:266.90px;color:#1c1c1c">HC</div>
<div class="t" style="left:364.80px;top:266.90px;color:#1c1c1c;width:101.2px;overflow:hidden">ECHO</div>
<div class="t" style="left:469.40px;top:266.90px;color:#1c1c1c;transform:scaleX(1.0545);transform-origin:0 0">270403^WN</div>
<div class="t" style="left:621.30px;top:266.90px;color:#1c1c1c">40</div>
<div class="t" style="left:653.50px;top:266.90px;color:#1c1c1c">F</div>
<div class="t" style="left:685.70px;top:266.90px;color:#1c1c1c"></div>
<div class="t" style="left:903.10px;top:266.90px;color:#1c1c1c;transform:scaleX(1.0459);transform-origin:0 0">NO KNOWN A</div>
<svg class="a" style="left:801px;top:267.80px" width="9" height="8" viewBox="0 0 9 8"><path d="M4.5 0.5Q4.8 0.5 5 0.9L8.6 6.9Q8.8 7.4 8.2 7.4H0.8Q0.2 7.4 0.4 6.9L4 0.9Q4.2 0.5 4.5 0.5Z" fill="#c41a2c"/><path d="M4.5 2.3V5M4.5 5.8V6.7" stroke="#f6d0d6" stroke-width="1"/></svg>
<div class="a" style="left:815px;top:265.70px;width:11px;height:12.5px;background:#ebebf2"></div>
<svg class="a" style="left:817.6px;top:268.10px" width="5" height="7.2" viewBox="0 0 5 7.2"><path d="M0.4 0.4H3.1L4.6 1.9V6.8H0.4Z" fill="#cfe8d0" stroke="#2a40b0" stroke-width="0.8"/><path d="M1.2 3.6H3.8M1.2 5H3.8" stroke="#5a9a5a" stroke-width="0.8"/></svg>
<div class="a" style="left:0;top:279.00px;width:973px;height:15.5px;background:linear-gradient(90deg,#fffff2 0%,#ffff48 100%)"></div>
<div class="a" style="left:0;top:278.70px;width:973px;height:1.2px;background:rgba(255,255,255,0.6)"></div>
<div class="t" style="left:19.40px;top:282.40px;color:#1c1c1c">8/16/2013 2:51:09 PM</div>
<div class="t" style="left:129.70px;top:282.40px;color:#1c1c1c">3</div>
<div class="t" style="left:176.90px;top:282.40px;color:#1c1c1c">HC</div>
<div class="t" style="left:371.60px;top:282.40px;color:#1c1c1c;width:94.4px;overflow:hidden">ECHO</div>
<div class="t" style="right:601.40px;top:282.40px;color:#1c1c1c">T&nbsp;</div>
<div class="t" style="left:469.40px;top:282.40px;color:#1c1c1c;transform:scaleX(1.0018);transform-origin:0 0">196811^KYZDDF^R.</div>
<div class="t" style="left:621.30px;top:282.40px;color:#1c1c1c">25</div>
<div class="t" style="left:653.50px;top:282.40px;color:#1c1c1c">F</div>
<div class="t" style="left:685.70px;top:282.40px;color:#1c1c1c"></div>
<div class="t" style="left:903.10px;top:282.40px;color:#1c1c1c;transform:scaleX(1.0459);transform-origin:0 0">NO KNOWN A</div>
<svg class="a" style="left:801px;top:283.30px" width="9" height="8" viewBox="0 0 9 8"><path d="M4.5 0.5Q4.8 0.5 5 0.9L8.6 6.9Q8.8 7.4 8.2 7.4H0.8Q0.2 7.4 0.4 6.9L4 0.9Q4.2 0.5 4.5 0.5Z" fill="#c41a2c"/><path d="M4.5 2.3V5M4.5 5.8V6.7" stroke="#f6d0d6" stroke-width="1"/></svg>
<div class="a" style="left:815px;top:281.20px;width:11px;height:12.5px;background:#ebebf2"></div>
<svg class="a" style="left:817.6px;top:283.60px" width="5" height="7.2" viewBox="0 0 5 7.2"><path d="M0.4 0.4H3.1L4.6 1.9V6.8H0.4Z" fill="#fff" stroke="#2a48c8" stroke-width="0.8"/></svg>
<div class="a" style="left:0;top:294.50px;width:973px;height:15.5px;background:linear-gradient(90deg,#fffff2 0%,#ffff48 100%)"></div>
<div class="a" style="left:0;top:294.20px;width:973px;height:1.2px;background:rgba(255,255,255,0.6)"></div>
<div class="t" style="left:19.40px;top:297.90px;color:#1c1c1c">8/16/2013 2:46:51 PM</div>
<div class="t" style="left:129.70px;top:297.90px;color:#1c1c1c">1</div>
<div class="t" style="left:176.90px;top:297.90px;color:#1c1c1c">HC\PR\DO...</div>
<div class="t" style="left:364.80px;top:297.90px;color:#1c1c1c;width:101.2px;overflow:hidden">ECHO</div>
<div class="t" style="left:469.40px;top:297.90px;color:#1c1c1c;transform:scaleX(0.9458);transform-origin:0 0">270343^JOJZSO SQCGA</div>
<div class="t" style="left:621.30px;top:297.90px;color:#1c1c1c">0</div>
<div class="t" style="left:653.50px;top:297.90px;color:#1c1c1c">M</div>
<div class="t" style="left:685.70px;top:297.90px;color:#1c1c1c"></div>
<div class="t" style="left:903.10px;top:297.90px;color:#1c1c1c;transform:scaleX(1.0459);transform-origin:0 0">NO KNOWN A</div>
<svg class="a" style="left:801px;top:298.80px" width="9" height="8" viewBox="0 0 9 8"><path d="M4.5 0.5Q4.8 0.5 5 0.9L8.6 6.9Q8.8 7.4 8.2 7.4H0.8Q0.2 7.4 0.4 6.9L4 0.9Q4.2 0.5 4.5 0.5Z" fill="#c41a2c"/><path d="M4.5 2.3V5M4.5 5.8V6.7" stroke="#f6d0d6" stroke-width="1"/></svg>
<div class="a" style="left:815px;top:296.70px;width:11px;height:12.5px;background:#ebebf2"></div>
<svg class="a" style="left:817.6px;top:299.10px" width="5" height="7.2" viewBox="0 0 5 7.2"><path d="M0.4 0.4H3.1L4.6 1.9V6.8H0.4Z" fill="#fff" stroke="#2a48c8" stroke-width="0.8"/></svg>
<div class="a" style="left:0;top:310.00px;width:973px;height:15.5px;background:linear-gradient(90deg,#fffff2 0%,#ffff48 100%)"></div>
<div class="a" style="left:0;top:309.70px;width:973px;height:1.2px;background:rgba(255,255,255,0.6)"></div>
<div class="t" style="left:19.40px;top:313.40px;color:#1c1c1c">8/16/2013 2:49:37 PM</div>
<div class="t" style="left:129.70px;top:313.40px;color:#1c1c1c">2</div>
<div class="t" style="left:176.90px;top:313.40px;color:#1c1c1c">HC</div>
<div class="t" style="left:371.60px;top:313.40px;color:#1c1c1c;width:94.4px;overflow:hidden">ECHO</div>
<div class="t" style="right:601.40px;top:313.40px;color:#1c1c1c">T&nbsp;</div>
<div class="t" style="left:469.40px;top:313.40px;color:#1c1c1c;transform:scaleX(1.0267);transform-origin:0 0">145105^DARPAQO^I</div>
<div class="t" style="left:621.30px;top:313.40px;color:#1c1c1c">53</div>
<div class="t" style="left:653.50px;top:313.40px;color:#1c1c1c">M</div>
<div class="t" style="left:685.70px;top:313.40px;color:#1c1c1c"></div>
<div class="t" style="left:903.10px;top:313.40px;color:#1c1c1c;transform:scaleX(1.0459);transform-origin:0 0">NO KNOWN A</div>
<svg class="a" style="left:801px;top:314.30px" width="9" height="8" viewBox="0 0 9 8"><path d="M4.5 0.5Q4.8 0.5 5 0.9L8.6 6.9Q8.8 7.4 8.2 7.4H0.8Q0.2 7.4 0.4 6.9L4 0.9Q4.2 0.5 4.5 0.5Z" fill="#c41a2c"/><path d="M4.5 2.3V5M4.5 5.8V6.7" stroke="#f6d0d6" stroke-width="1"/></svg>
<div class="a" style="left:815px;top:312.20px;width:11px;height:12.5px;background:#ebebf2"></div>
<svg class="a" style="left:817.6px;top:314.60px" width="5" height="7.2" viewBox="0 0 5 7.2"><path d="M0.4 0.4H3.1L4.6 1.9V6.8H0.4Z" fill="#fff" stroke="#2a48c8" stroke-width="0.8"/></svg>
<div class="a" style="left:0;top:325.50px;width:973px;height:15.5px;background:linear-gradient(90deg,#fffff2 0%,#ffff48 100%)"></div>
<div class="a" style="left:0;top:325.20px;width:973px;height:1.2px;background:rgba(255,255,255,0.6)"></div>
<div class="t" style="left:19.40px;top:328.90px;color:#1c1c1c;transform:scaleX(0.9997);transform-origin:0 0">8/15/2013 11:44:54 A...</div>
<div class="t" style="left:129.70px;top:328.90px;color:#1c1c1c">9</div>
<div class="t" style="left:176.90px;top:328.90px;color:#1c1c1c">CADS\DO...</div>
<div class="t" style="left:364.50px;top:328.90px;color:#1c1c1c;transform:scaleX(0.9061);transform-origin:0 0">AMMO BILAT SCREEN</div>
<div class="t" style="left:469.40px;top:328.90px;color:#1c1c1c;transform:scaleX(1.0447);transform-origin:0 0">RAM613765^WHA^D</div>
<div class="t" style="left:621.30px;top:328.90px;color:#1c1c1c">70</div>
<div class="t" style="left:653.50px;top:328.90px;color:#1c1c1c">F</div>
<div class="t" style="left:685.70px;top:328.90px;color:#1c1c1c">G0202\77052</div>
<div class="t" style="left:903.10px;top:328.90px;color:#1c1c1c;transform:scaleX(1.0459);transform-origin:0 0">NO KNOWN A</div>
<svg class="a" style="left:801px;top:329.80px" width="9" height="8" viewBox="0 0 9 8"><path d="M4.5 0.5Q4.8 0.5 5 0.9L8.6 6.9Q8.8 7.4 8.2 7.4H0.8Q0.2 7.4 0.4 6.9L4 0.9Q4.2 0.5 4.5 0.5Z" fill="#c41a2c"/><path d="M4.5 2.3V5M4.5 5.8V6.7" stroke="#f6d0d6" stroke-width="1"/></svg>
<div class="a" style="left:815px;top:327.70px;width:22px;height:12.5px;background:#ebebf2"></div>
<svg class="a" style="left:817.6px;top:330.10px" width="5" height="7.2" viewBox="0 0 5 7.2"><path d="M0.4 0.4H3.1L4.6 1.9V6.8H0.4Z" fill="#cfe8d0" stroke="#2a40b0" stroke-width="0.8"/><path d="M1.2 3.6H3.8M1.2 5H3.8" stroke="#5a9a5a" stroke-width="0.8"/></svg>
<svg class="a" style="left:827.9px;top:330.40px" width="7" height="6.4" viewBox="0 0 7 6.4"><path d="M0.3 1.8H1.8L4 0.2V6.2L1.8 4.6H0.3Z" fill="#2a5ad8"/><path d="M1 2.4H2.2V4H1Z" fill="#7ac0f0"/><path d="M5.2 1.3Q5.9 3.2 5.2 5.1M6.2 0.5Q7 3.2 6.2 5.9" stroke="#6a7ad0" stroke-width="0.8" fill="none"/></svg>
<div class="a" style="left:0;top:341.00px;width:973px;height:15.5px;background:linear-gradient(90deg,#fffff2 0%,#ffff48 100%)"></div>
<div class="a" style="left:0;top:340.70px;width:973px;height:1.2px;background:rgba(255,255,255,0.6)"></div>
<div class="t" style="left:19.40px;top:344.40px;color:#1c1c1c;transform:scaleX(0.9925);transform-origin:0 0">8/15/2013 10:28:28 A...</div>
<div class="t" style="left:129.70px;top:344.40px;color:#1c1c1c">14</div>
<div class="t" style="left:176.90px;top:344.40px;color:#1c1c1c">CADS\DO...</div>
<div class="t" style="left:364.50px;top:344.40px;color:#1c1c1c;transform:scaleX(0.9218);transform-origin:0 0">AMMO UNI SCREEN</div>
<div class="t" style="left:469.40px;top:344.40px;color:#1c1c1c;transform:scaleX(0.9913);transform-origin:0 0">RAM521098^XMQJGOFX^F</div>
<div class="t" style="left:621.30px;top:344.40px;color:#1c1c1c">57</div>
<div class="t" style="left:653.50px;top:344.40px;color:#1c1c1c">F</div>
<div class="t" style="left:685.70px;top:344.40px;color:#1c1c1c">77052\G0202</div>
<div class="t" style="left:903.10px;top:344.40px;color:#1c1c1c;transform:scaleX(0.8860);transform-origin:0 0">SHELLFISH DER</div>
<svg class="a" style="left:801px;top:345.30px" width="9" height="8" viewBox="0 0 9 8"><path d="M4.5 0.5Q4.8 0.5 5 0.9L8.6 6.9Q8.8 7.4 8.2 7.4H0.8Q0.2 7.4 0.4 6.9L4 0.9Q4.2 0.5 4.5 0.5Z" fill="#c41a2c"/><path d="M4.5 2.3V5M4.5 5.8V6.7" stroke="#f6d0d6" stroke-width="1"/></svg>
<div class="a" style="left:815px;top:343.20px;width:22px;height:12.5px;background:#ebebf2"></div>
<svg class="a" style="left:817.6px;top:345.60px" width="5" height="7.2" viewBox="0 0 5 7.2"><path d="M0.4 0.4H3.1L4.6 1.9V6.8H0.4Z" fill="#cfe8d0" stroke="#2a40b0" stroke-width="0.8"/><path d="M1.2 3.6H3.8M1.2 5H3.8" stroke="#5a9a5a" stroke-width="0.8"/></svg>
<svg class="a" style="left:827.9px;top:345.90px" width="7" height="6.4" viewBox="0 0 7 6.4"><path d="M0.3 1.8H1.8L4 0.2V6.2L1.8 4.6H0.3Z" fill="#2a5ad8"/><path d="M1 2.4H2.2V4H1Z" fill="#7ac0f0"/><path d="M5.2 1.3Q5.9 3.2 5.2 5.1M6.2 0.5Q7 3.2 6.2 5.9" stroke="#6a7ad0" stroke-width="0.8" fill="none"/></svg>
<div class="a" style="left:0;top:356.50px;width:973px;height:15.5px;background:linear-gradient(90deg,#fffff2 0%,#ffff48 100%)"></div>
<div class="a" style="left:0;top:356.20px;width:973px;height:1.2px;background:rgba(255,255,255,0.6)"></div>
<div class="t" style="left:19.40px;top:359.90px;color:#1c1c1c">8/8/2013 2:30:00 PM</div>
<div class="t" style="left:129.70px;top:359.90px;color:#1c1c1c">1</div>
<div class="t" style="left:176.90px;top:359.90px;color:#1c1c1c">HC\SR\DO...</div>
<div class="t" style="left:364.50px;top:359.90px;color:#1c1c1c;transform:scaleX(0.9189);transform-origin:0 0">ONITOR UP TO 48 H...</div>
<div class="t" style="left:469.40px;top:359.90px;color:#1c1c1c;transform:scaleX(0.9993);transform-origin:0 0">RAM134239^SRALUQ^T.</div>
<div class="t" style="left:621.30px;top:359.90px;color:#1c1c1c">11</div>
<div class="t" style="left:653.50px;top:359.90px;color:#1c1c1c">M</div>
<div class="t" style="left:685.70px;top:359.90px;color:#1c1c1c">93224</div>
<div class="t" style="left:903.10px;top:359.90px;color:#1c1c1c;transform:scaleX(0.9730);transform-origin:0 0">NKDA</div>
<svg class="a" style="left:801px;top:360.80px" width="9" height="8" viewBox="0 0 9 8"><path d="M4.5 0.5Q4.8 0.5 5 0.9L8.6 6.9Q8.8 7.4 8.2 7.4H0.8Q0.2 7.4 0.4 6.9L4 0.9Q4.2 0.5 4.5 0.5Z" fill="#c41a2c"/><path d="M4.5 2.3V5M4.5 5.8V6.7" stroke="#f6d0d6" stroke-width="1"/></svg>
<div class="a" style="left:815px;top:358.70px;width:11px;height:12.5px;background:#ebebf2"></div>
<svg class="a" style="left:817.6px;top:361.10px" width="5" height="7.2" viewBox="0 0 5 7.2"><path d="M0.4 0.4H3.1L4.6 1.9V6.8H0.4Z" fill="#cfe8d0" stroke="#2a40b0" stroke-width="0.8"/><path d="M1.2 3.6H3.8M1.2 5H3.8" stroke="#5a9a5a" stroke-width="0.8"/></svg>
<div class="a" style="left:0;top:372.00px;width:973px;height:15.5px;background:linear-gradient(90deg,#fffff2 0%,#ffff48 100%)"></div>
<div class="a" style="left:0;top:371.70px;width:973px;height:1.2px;background:rgba(255,255,255,0.6)"></div>
<div class="t" style="left:19.40px;top:375.40px;color:#1c1c1c">2/20/2013 8:00:00 PM</div>
<div class="t" style="left:129.70px;top:375.40px;color:#1c1c1c">760</div>
<div class="t" style="left:176.90px;top:375.40px;color:#1c1c1c">CT\PR\DO...</div>
<div class="t" style="left:364.50px;top:375.40px;color:#1c1c1c;transform:scaleX(0.9218);transform-origin:0 0">E^CARDIAQUE  STA...</div>
<div class="t" style="left:469.40px;top:375.40px;color:#1c1c1c;transform:scaleX(0.9633);transform-origin:0 0">MAGIX</div>
<div class="t" style="left:621.30px;top:375.40px;color:#1c1c1c">0</div>
<div class="t" style="left:653.50px;top:375.40px;color:#1c1c1c">O</div>
<div class="t" style="left:685.70px;top:375.40px;color:#1c1c1c;transform:scaleX(0.8590);transform-origin:0 0">CTCOEUR</div>
<div class="t" style="left:903.10px;top:375.40px;color:#1c1c1c;transform:scaleX(1.0459);transform-origin:0 0">NO KNOWN A</div>
<svg class="a" style="left:801px;top:376.30px" width="9" height="8" viewBox="0 0 9 8"><path d="M4.5 0.5Q4.8 0.5 5 0.9L8.6 6.9Q8.8 7.4 8.2 7.4H0.8Q0.2 7.4 0.4 6.9L4 0.9Q4.2 0.5 4.5 0.5Z" fill="#c41a2c"/><path d="M4.5 2.3V5M4.5 5.8V6.7" stroke="#f6d0d6" stroke-width="1"/></svg>
<div class="a" style="left:815px;top:374.20px;width:11px;height:12.5px;background:#ebebf2"></div>
<svg class="a" style="left:817.6px;top:376.60px" width="5" height="7.2" viewBox="0 0 5 7.2"><path d="M0.4 0.4H3.1L4.6 1.9V6.8H0.4Z" fill="#1244e0" stroke="#0b2fa8" stroke-width="0.7"/><path d="M1.4 1.4V3" stroke="#4ab0ff" stroke-width="0.9"/></svg>
<div class="a" style="left:0;top:387.50px;width:973px;height:15.5px;background:linear-gradient(90deg,#fffff2 0%,#ffff48 100%)"></div>
<div class="a" style="left:0;top:387.20px;width:973px;height:1.2px;background:rgba(255,255,255,0.6)"></div>
</div>
<div class="a" style="left:22px;top:62px;width:15px;height:392px;background:#333"></div>
<div class="a" style="left:1010px;top:0;width:14px;height:468px;background:#4b4853"></div>
<div class="a" style="left:1010px;top:0;width:14px;height:14px;background:#333"></div>
<div class="a" style="left:1008px;top:0;width:1px;height:26px;background:#3b3b3b"></div>
<div class="a" style="left:1014.5px;top:6px;width:0;height:0;border-left:3px solid transparent;border-right:3px solid transparent;border-bottom:3.5px solid #9a9a9a"></div>
<div class="a" style="left:1012.8px;top:14px;width:8.8px;height:131.5px;background:linear-gradient(180deg,#0f5f73,#0f5f73 85%,#0e4d60)"></div>
<div class="a" style="left:1010px;top:440px;width:14px;height:28px;background:#333"></div>
<div class="a" style="left:1014.5px;top:446px;width:0;height:0;border-left:3px solid transparent;border-right:3px solid transparent;border-top:3.5px solid #9a9a9a"></div>
<div class="a" style="left:0;top:454px;width:1010px;height:14px;background:#4b4853"></div>
<div class="a" style="left:0;top:454px;width:13.7px;height:14px;background:#333"></div>
<div class="a" style="left:5px;top:457.5px;width:0;height:0;border-top:2.8px solid transparent;border-bottom:2.8px solid transparent;border-right:3.5px solid #9a9a9a"></div>
<div class="a" style="left:13.7px;top:456.5px;width:716px;height:8.5px;background:linear-gradient(90deg,#0f6073 0%,#0f6073 75%,#0c2c45 100%)"></div>
<div class="a" style="left:996px;top:454px;width:28px;height:14px;background:#333"></div>
<div class="a" style="left:1001.5px;top:459px;width:0;height:0;border-top:2.8px solid transparent;border-bottom:2.8px solid transparent;border-left:3.5px solid #9a9a9a"></div>
<div class="a" style="left:244px;top:99px;width:161px;height:380px;background:rgba(0,0,0,0.12)"></div>
<div class="a" style="left:242px;top:97px;width:161px;height:380px;background:#4f4f4f;border:1px solid #454545"></div>
<div class="a" style="left:267px;top:98.90px;font-size:10px;line-height:19.2px;color:#dedede;white-space:nowrap;transform:scaleX(0.9972);transform-origin:0 0">Open</div>
<div class="a" style="left:267px;top:118.10px;font-size:10px;line-height:19.2px;color:#dedede;white-space:nowrap;transform:scaleX(0.9990);transform-origin:0 0">Study Information</div>
<div class="a" style="left:267px;top:137.30px;font-size:10px;line-height:19.2px;color:#dedede;white-space:nowrap;transform:scaleX(0.9385);transform-origin:0 0">Customize Columns...</div>
<div class="a" style="left:265px;top:155.80px;width:133px;height:1px;background:#5a5a5a"></div>
<div class="a" style="left:267px;top:158.20px;font-size:10px;line-height:19.2px;color:#dedede;white-space:nowrap;transform:scaleX(0.9521);transform-origin:0 0"><span style="text-decoration:underline;text-underline-offset:0px;text-decoration-thickness:1px">S</span>tatus</div>
<div class="a" style="left:393px;top:162.70px;width:0;height:0;border-top:4.2px solid transparent;border-bottom:4.2px solid transparent;border-left:5.4px solid #e6e6e6"></div>
<div class="a" style="left:267px;top:177.40px;font-size:10px;line-height:19.2px;color:#dedede;white-space:nowrap;transform:scaleX(0.9472);transform-origin:0 0"><span style="text-decoration:underline;text-underline-offset:0px;text-decoration-thickness:1px">P</span>erforming Physician</div>
<div class="a" style="left:393px;top:181.90px;width:0;height:0;border-top:4.2px solid transparent;border-bottom:4.2px solid transparent;border-left:5.4px solid #e6e6e6"></div>
<div class="a" style="left:267px;top:196.60px;font-size:10px;line-height:19.2px;color:#dedede;white-space:nowrap;transform:scaleX(0.9812);transform-origin:0 0">Performing Te<span style="text-decoration:underline;text-underline-offset:0px;text-decoration-thickness:1px">c</span>hnologist</div>
<div class="a" style="left:393px;top:201.10px;width:0;height:0;border-top:4.2px solid transparent;border-bottom:4.2px solid transparent;border-left:5.4px solid #e6e6e6"></div>
<div class="a" style="left:243.5px;top:214.90px;width:158px;height:19.2px;background:#119cf6"></div>
<div class="a" style="left:267px;top:215.80px;font-size:10px;line-height:19.2px;color:#dedede;white-space:nowrap;transform:scaleX(0.9272);transform-origin:0 0"><span style="text-decoration:underline;text-underline-offset:0px;text-decoration-thickness:1px">R</span>eading Physician</div>
<div class="a" style="left:393px;top:220.30px;width:0;height:0;border-top:4.2px solid transparent;border-bottom:4.2px solid transparent;border-left:5.4px solid #e6e6e6"></div>
<div class="a" style="left:267px;top:235.00px;font-size:10px;line-height:19.2px;color:#dedede;white-space:nowrap;transform:scaleX(0.9306);transform-origin:0 0">Re<span style="text-decoration:underline;text-underline-offset:0px;text-decoration-thickness:1px">f</span>erring Physician</div>
<div class="a" style="left:393px;top:239.50px;width:0;height:0;border-top:4.2px solid transparent;border-bottom:4.2px solid transparent;border-left:5.4px solid #e6e6e6"></div>
<div class="a" style="left:267px;top:254.20px;font-size:10px;line-height:19.2px;color:#dedede;white-space:nowrap;transform:scaleX(0.9653);transform-origin:0 0"><span style="text-decoration:underline;text-underline-offset:0px;text-decoration-thickness:1px">T</span>ranscriptionist</div>
<div class="a" style="left:393px;top:258.70px;width:0;height:0;border-top:4.2px solid transparent;border-bottom:4.2px solid transparent;border-left:5.4px solid #e6e6e6"></div>
<div class="a" style="left:267px;top:273.40px;font-size:10px;line-height:19.2px;color:#dedede;white-space:nowrap;transform:scaleX(0.9928);transform-origin:0 0">Priorit<span style="text-decoration:underline;text-underline-offset:0px;text-decoration-thickness:1px">y</span></div>
<div class="a" style="left:393px;top:277.90px;width:0;height:0;border-top:4.2px solid transparent;border-bottom:4.2px solid transparent;border-left:5.4px solid #e6e6e6"></div>
<div class="a" style="left:267px;top:292.60px;font-size:10px;line-height:19.2px;color:#dedede;white-space:nowrap;transform:scaleX(1.0079);transform-origin:0 0"><span style="text-decoration:underline;text-underline-offset:0px;text-decoration-thickness:1px">A</span>udit Log</div>
<div class="a" style="left:393px;top:297.10px;width:0;height:0;border-top:4.2px solid transparent;border-bottom:4.2px solid transparent;border-left:5.4px solid #e6e6e6"></div>
<div class="a" style="left:267px;top:311.80px;font-size:10px;line-height:19.2px;color:#dedede;white-space:nowrap;transform:scaleX(0.9497);transform-origin:0 0">Unlink Patient</div>
<div class="a" style="left:267px;top:331.00px;font-size:10px;line-height:19.2px;color:#dedede;white-space:nowrap;transform:scaleX(0.9347);transform-origin:0 0">Cancel Alert</div>
<div class="a" style="left:267px;top:350.20px;font-size:10px;line-height:19.2px;color:#dedede;white-space:nowrap;transform:scaleX(0.9804);transform-origin:0 0">Send To</div>
<div class="a" style="left:393px;top:354.70px;width:0;height:0;border-top:4.2px solid transparent;border-bottom:4.2px solid transparent;border-left:5.4px solid #e6e6e6"></div>
<div class="a" style="left:267px;top:369.40px;font-size:10px;line-height:19.2px;color:#dedede;white-space:nowrap;transform:scaleX(0.9321);transform-origin:0 0">Export ...</div>
<div class="a" style="left:265px;top:387.90px;width:133px;height:1px;background:#5a5a5a"></div>
<div class="a" style="left:267px;top:390.30px;font-size:10px;line-height:19.2px;color:#dedede;white-space:nowrap;transform:scaleX(0.9406);transform-origin:0 0">Patient Ledger</div>
<div class="a" style="left:265px;top:408.80px;width:133px;height:1px;background:#5a5a5a"></div>
<div class="a" style="left:267px;top:411.20px;font-size:10px;line-height:19.2px;color:#dedede;white-space:nowrap;transform:scaleX(0.9467);transform-origin:0 0">Payment Entry</div>
<div class="a" style="left:267px;top:430.40px;font-size:10px;line-height:19.2px;color:#dedede;white-space:nowrap;transform:scaleX(0.9514);transform-origin:0 0">Delete</div>
<div class="a" style="left:267px;top:449.60px;font-size:10px;line-height:19.2px;color:#dedede;white-space:nowrap;transform:scaleX(1.0154);transform-origin:0 0">Options</div>
<div class="a" style="left:393px;top:454.10px;width:0;height:0;border-top:4.2px solid transparent;border-bottom:4.2px solid transparent;border-left:5.4px solid #e6e6e6"></div>
<div class="a" style="left:404px;top:216px;width:163px;height:61.5px;background:rgba(0,0,0,0.12)"></div>
<div class="a" style="left:402px;top:214px;width:163px;height:61.5px;background:#4f4f4f;border:1px solid #454545"></div>
<svg class="a" style="left:406px;top:219px" width="14" height="12" viewBox="0 0 14 12"><path d="M1.2 6.2L4.6 9.6L12.6 1.6" stroke="#e8e8e8" stroke-width="1.5" fill="none"/></svg>
<div class="a" style="left:427.2px;top:216px;font-size:10.4px;line-height:19px;color:#dedede;white-space:nowrap;transform:scaleX(0.9136);transform-origin:0 0">RADMINLN3^RADMINFN3</div>
<div class="a" style="left:402.5px;top:236.2px;width:162px;height:17.5px;background:#119cf6"></div>
<div class="a" style="left:427.2px;top:237px;font-size:10.4px;line-height:18px;color:#ffffff;white-space:nowrap;transform:scaleX(0.8319);transform-origin:0 0">Search</div>
<div class="a" style="left:456.7px;top:235.3px;width:108.1px;height:18.5px;background:#323232;border:1px solid #2a8fd0;border-left:none"></div>
<div class="a" style="left:553.2px;top:236.3px;width:11.3px;height:16.5px;background:#0b4b80"></div>
<div class="a" style="left:556.3px;top:244px;width:0;height:0;border-left:3px solid transparent;border-right:3px solid transparent;border-bottom:0;border-top:3.3px solid #f0f0f0"></div>
<div class="a" style="left:458.3px;top:237px;font-size:10.4px;line-height:18px;color:#d8d8d8;white-space:nowrap">r</div>
<div class="a" style="left:461.8px;top:240px;width:1px;height:10.5px;background:#e0e0e0"></div>
<div class="a" style="left:427.2px;top:256.5px;font-size:10.4px;line-height:19px;color:#dedede;white-space:nowrap;transform:scaleX(0.8793);transform-origin:0 0">Unassign</div>
<div class="a" style="left:565.2px;top:236.2px;width:448.8px;height:106.6px;background:#323232;border:1px solid #3a3a3a"></div>
<div class="a" style="left:566.0px;top:250.3px;width:434px;height:12.5px;background:#1b4a6c"></div>
<div class="a" style="left:567px;top:237.10px;font-size:10.2px;line-height:14px;color:#e2e2e2;white-space:nowrap;transform:scaleX(0.8506);transform-origin:0 0">BZAHSFTRKM^JSFBOU</div>
<div class="a" style="left:567px;top:250.50px;font-size:10.2px;line-height:14px;color:#e2e2e2;white-space:nowrap;transform:scaleX(0.9092);transform-origin:0 0">DELLLN^RISPACSMU^MIDNAMEF^MS. - 3399765123 - 123 ADDRESS DELL - YOUNG AMERICA - MN</div>
<div class="a" style="left:567px;top:263.90px;font-size:10.2px;line-height:14px;color:#e2e2e2;white-space:nowrap;transform:scaleX(0.8996);transform-origin:0 0">HBN^JCIMNPQ</div>
<div class="a" style="left:567px;top:277.30px;font-size:10.2px;line-height:14px;color:#e2e2e2;white-space:nowrap;transform:scaleX(0.8100);transform-origin:0 0">JWJDG - TEST</div>
<div class="a" style="left:567px;top:290.70px;font-size:10.2px;line-height:14px;color:#e2e2e2;white-space:nowrap;transform:scaleX(0.9086);transform-origin:0 0">RADIOLOGIST^READING - 1125477889</div>
<div class="a" style="left:567px;top:304.10px;font-size:10.2px;line-height:14px;color:#e2e2e2;white-space:nowrap;transform:scaleX(0.9274);transform-origin:0 0">RADMINLNA^RADMINFNB - 2345678765</div>
<div class="a" style="left:567px;top:317.50px;font-size:10.2px;line-height:14px;color:#e2e2e2;white-space:nowrap;transform:scaleX(0.8639);transform-origin:0 0">READER^READER - 123</div>
<div class="a" style="left:567px;top:330.90px;font-size:10.2px;line-height:14px;color:#e2e2e2;white-space:nowrap;transform:scaleX(0.8847);transform-origin:0 0">READINGPHY^ONE - 200 BOYLSTON AVE</div>
<div class="a" style="left:1000.2px;top:236.4px;width:13.8px;height:106.4px;background:#f0f0f0"></div>
<div class="a" style="left:1001.5px;top:250.5px;width:11.5px;height:48.2px;background:#cdcdcd"></div>
<svg class="a" style="left:1003px;top:240px" width="9" height="6" viewBox="0 0 9 6"><path d="M1 5L4.5 1.5L8 5" stroke="#555" stroke-width="1.1" fill="none"/></svg>
<svg class="a" style="left:1003px;top:333px" width="9" height="6" viewBox="0 0 9 6"><path d="M1 1L4.5 4.5L8 1" stroke="#555" stroke-width="1.1" fill="none"/></svg>
</body></html>
